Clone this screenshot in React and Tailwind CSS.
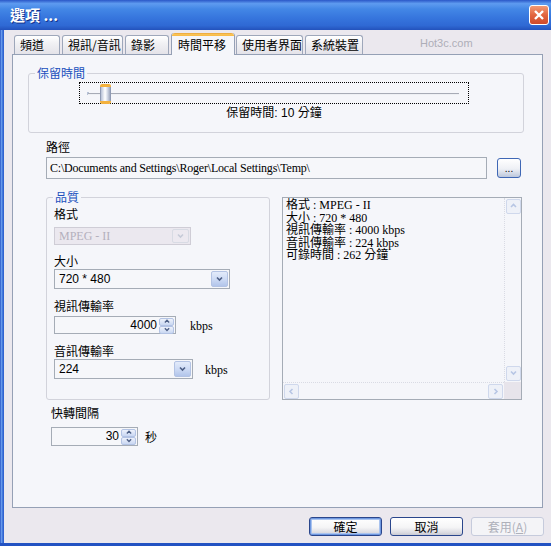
import React from 'react';

// ─── shared bits ─────────────────────────────────────────────────────────────

const CJK = "font-['Noto_Sans_CJK_TC',sans-serif]";
const SERIF = "font-['Liberation_Serif','Noto_Sans_CJK_TC',serif]";
const SANS = "font-['Liberation_Sans','Noto_Sans_CJK_TC',sans-serif]";

function Chevron({ dir = 'down', color = '#4d5f86', size = 7 }) {
  const d = dir === 'down' ? 'M1 1.5 L3.5 4 L6 1.5' : dir === 'up' ? 'M1 4 L3.5 1.5 L6 4'
    : dir === 'left' ? 'M4.5 1 L2 3.5 L4.5 6' : 'M2.5 1 L5 3.5 L2.5 6';
  return (
    <svg width={size} height={size} viewBox="0 0 7 7">
      <path d={d} fill="none" stroke={color} strokeWidth="1.6" />
    </svg>
  );
}

function DropButton({ disabled }) {
  return (
    <div
      className={
        'w-[17px] h-full rounded-[2px] border flex items-center justify-center ' +
        (disabled
          ? 'border-[#d8dbe4] bg-[#ece9f0]'
          : 'border-[#b3c3e4] bg-[linear-gradient(180deg,#e3ebfa_0%,#cbd9f4_55%,#b2c5ea_100%)]')
      }
    >
      <Chevron color={disabled ? '#c6cbd8' : '#4d5f86'} />
    </div>
  );
}

function Combo({ value, className, disabled }) {
  return (
    <div
      className={
        'flex border p-[1px] ' +
        (disabled ? 'border-[#cfcdd6] bg-[#ebe8ef] ' : 'border-[#a5acb6] bg-[#f6f7fa] ') +
        className
      }
    >
      <span
        className={
          'flex-1 pl-[3px] text-[12px] leading-[16px] flex items-center ' +
          (disabled ? SERIF + ' text-[#b4b0bd]' : SANS + ' text-black')
        }
      >
        {value}
      </span>
      <DropButton disabled={disabled} />
    </div>
  );
}

function SpinButton({ dir }) {
  return (
    <div className="flex-1 rounded-[2px] border border-[#b3c3e4] bg-[linear-gradient(180deg,#eef2fb_0%,#c9d7f2_100%)] flex items-center justify-center">
      <Chevron dir={dir} size={6} color="#4d5f86" />
    </div>
  );
}

function Spin({ value, className }) {
  return (
    <div className={'flex border border-[#a5acb6] bg-[#f6f7fa] p-[1px] ' + className}>
      <span className={SANS + ' flex-1 text-right pr-[2px] text-[12px] leading-[15px] flex items-center justify-end'}>
        {value}
      </span>
      <div className="w-[15px] flex flex-col">
        <SpinButton dir="up" />
        <SpinButton dir="down" />
      </div>
    </div>
  );
}

function Group({ label, className, children }) {
  return (
    <div className={'relative border border-[#d2d3db] rounded-[3px] ' + className}>
      <span className={CJK + ' absolute -top-[8px] left-[6px] px-[2px] bg-[#f5f6fa] text-[#2150bd] text-[12px] leading-[14px]'}>
        {label}
      </span>
      {children}
    </div>
  );
}

function Label({ children, className = '' }) {
  return <div className={CJK + ' text-[12px] leading-[14px] text-black ' + className}>{children}</div>;
}

// ─── title bar ───────────────────────────────────────────────────────────────

function TitleBar() {
  return (
    <div className="h-[30px] flex items-center pl-[10px] pr-[2px] bg-[linear-gradient(180deg,#2a57c8_0%,#5e9bf0_12%,#4387e6_30%,#3675dd_60%,#2f69d4_85%,#2352bc_100%)]">
      <span className={CJK + ' text-white font-bold text-[15px] leading-[18px] [text-shadow:1px_1px_0_#12318a]'}>
        選項 ...
      </span>
      <div className="ml-auto w-[20px] h-[20px] rounded-[3px] border border-white bg-[linear-gradient(180deg,#f39a75_0%,#e2653f_50%,#cf4a2a_100%)] flex items-center justify-center">
        <svg width="12" height="12" viewBox="0 0 12 12">
          <path d="M2 2 L10 10 M10 2 L2 10" stroke="white" strokeWidth="2.4" />
        </svg>
      </div>
    </div>
  );
}

// ─── tabs ────────────────────────────────────────────────────────────────────

const TABS = [
  { label: '頻道', w: 'w-[46px]', ml: 'ml-[2px]' },
  { label: '視訊/音訊', w: 'w-[61px]', ml: 'ml-[2px]' },
  { label: '錄影', w: 'w-[44px]', ml: 'ml-[2px]' },
  { label: '時間平移', w: 'w-[64px]', ml: 'ml-[2px]', active: true },
  { label: '使用者界面', w: 'w-[67px]', ml: 'ml-[1px]' },
  { label: '系統裝置', w: 'w-[58px]', ml: 'ml-[2px]' },
];

function TabStrip() {
  return (
    <div className="h-[21px] flex items-end">
      {TABS.map(t =>
        t.active ? (
          <div
            key={t.label}
            className={t.w + ' ' + t.ml + ' relative z-10 -mb-[1px] h-[22px] rounded-t-[3px] border-x border-[#95a0b5] bg-[#f5f6fa] flex flex-col'}
          >
            <div className="h-[3px] rounded-t-[3px] bg-[linear-gradient(180deg,#e8a43a_0%,#fcc85a_60%,#f5b33f_100%)]" />
            <span className={CJK + ' pl-[6px] text-[12px] leading-[16px] pt-[1px]'}>{t.label}</span>
          </div>
        ) : (
          <div
            key={t.label}
            className={t.w + ' ' + t.ml + ' h-[19px] rounded-t-[3px] border-x border-t border-[#9ea7ba] bg-[linear-gradient(180deg,#ffffff_0%,#f1f1f4_40%,#e4e3e9_100%)] flex items-center'}
          >
            <span className={CJK + ' pl-[5px] text-[12px] leading-[16px]'}>{t.label}</span>
          </div>
        ),
      )}
      <span className="ml-[57px] self-center mb-[1px] font-['Liberation_Sans',sans-serif] text-[11px] leading-[12px] text-[#aeaeb8]">
        Hot3c.com
      </span>
    </div>
  );
}

// ─── slider ──────────────────────────────────────────────────────────────────

function Slider() {
  return (
    <div className="relative ml-[50px] mt-[8px] w-[390px] h-[22px] border border-dotted border-black">
      <div className="absolute left-[7px] top-[9px] w-[2px] h-[3px] bg-[#b8c3d8]" />
      <div className="absolute left-[8px] top-[10px] w-[371px] h-[2px] bg-[#a7abb6] border-b border-[#eef0f4]" />
      <div className="absolute left-[20px] top-[1px] w-[11px] h-[20px] flex flex-col">
        <div className="h-[3px] rounded-t-[2px] bg-[#f3b13d]" />
        <div className="flex-1 border-x border-[#8f9ab3] bg-[linear-gradient(90deg,#b6c0d6_0%,#ffffff_45%,#dfe4ee_65%,#9ea8bf_100%)]" />
        <div className="h-[3px] rounded-b-[2px] bg-[#f3b13d]" />
      </div>
    </div>
  );
}

// ─── info list with disabled scroll bars ─────────────────────────────────────

const INFO = [
  '格式 : MPEG - II',
  '大小 : 720 * 480',
  '視訊傳輸率 : 4000 kbps',
  '音訊傳輸率 : 224 kbps',
  '可錄時間 : 262 分鐘',
];

function ScrollBtn({ dir }) {
  return (
    <div className="w-[15px] h-[15px] rounded-[2px] border border-[#cfd8ec] bg-[#eef1f8] flex items-center justify-center">
      <Chevron dir={dir} color="#b7c6e4" />
    </div>
  );
}

function InfoList() {
  return (
    <div className="w-[240px] h-[203px] border border-[#a5acb6] bg-[#f5f6fa] flex flex-col">
      <div className="flex flex-1 min-h-0">
        <div className={SERIF + ' flex-1 pl-[3px] pt-[1px] text-[12px] leading-[12.5px] text-black'}>
          {INFO.map(l => (
            <div key={l}>{l}</div>
          ))}
        </div>
        <div className="w-[17px] flex flex-col items-center pt-[1px] pb-[1px] border-l border-dotted border-[#d9dbe4]">
          <ScrollBtn dir="up" />
          <div className="flex-1" />
          <ScrollBtn dir="down" />
        </div>
      </div>
      <div className="h-[17px] flex">
        <div className="flex-1 flex items-center px-[1px] border-t border-dotted border-[#d9dbe4]">
          <ScrollBtn dir="left" />
          <div className="flex-1" />
          <ScrollBtn dir="right" />
        </div>
        <div className="w-[17px] bg-[#e7e4eb]" />
      </div>
    </div>
  );
}

// ─── dialog buttons ──────────────────────────────────────────────────────────

function XPButton({ children, isDefault, disabled }) {
  const base = CJK + ' w-[73px] h-[19px] rounded-[3px] border text-[12px] leading-[14px] flex items-center justify-center ';
  if (disabled) {
    return <div className={base + 'border-[#c6cbdc] bg-[#f4f4f7] text-[#aeb0ba]'}>{children}</div>;
  }
  return (
    <div
      className={
        base +
        'border-[#2a468c] text-black bg-[linear-gradient(180deg,#ffffff_0%,#f5f5f6_55%,#dcdce2_85%,#c9cad3_100%)] ' +
        (isDefault ? 'shadow-[inset_0_0_0_1px_#6f98e0,inset_0_0_0_2px_#a9c3ef]' : '')
      }
    >
      {children}
    </div>
  );
}

// ─── main ────────────────────────────────────────────────────────────────────

export default function App() {
  return (
    <div className="w-[551px] h-[546px] flex flex-col overflow-hidden">
      <TitleBar />
      <div className="flex flex-1 min-h-0">
        <div className="w-[4px] bg-[linear-gradient(90deg,#2550c4_0%,#6a9cec_35%,#3a6fd8_70%,#2a5cc9_100%)]" />
        <div className="flex-1 bg-[#ebe8ee] flex flex-col pl-[8px] pr-[7px] pt-[3px]">
          <TabStrip />

          <div className="h-[454px] mr-[1px] border border-[#95a0b5] bg-[#f5f6fa] flex flex-col">
            <Group label="保留時間" className="mt-[18px] ml-[15px] w-[496px] h-[60px]">
              <Slider />
              <div className={SANS + ' ml-[50px] mt-[2px] w-[390px] text-center text-[12px] leading-[15px]'}>
                保留時間: 10 分鐘
              </div>
            </Group>

            <Label className="mt-[7px] ml-[33px]">路徑</Label>
            <div className="mt-[3px] ml-[33px] flex items-center gap-[10px]">
              <div className={SERIF + ' w-[441px] h-[22px] border border-[#a5acb6] bg-[#f6f7fa] pl-[3px] text-[12px] leading-[20px] tracking-[-0.2px] whitespace-nowrap overflow-hidden'}>
                C:\Documents and Settings\Roger\Local Settings\Temp\
              </div>
              <div className="w-[24px] h-[20px] rounded-[3px] border border-[#3f67b5] bg-[linear-gradient(180deg,#ffffff_0%,#eef0f5_55%,#bcc7dc_100%)] flex items-end justify-center pb-[4px]">
                <span className="font-['Liberation_Sans',sans-serif] text-[10px] leading-[8px] text-black">...</span>
              </div>
            </div>

            <div className="mt-[18px] ml-[33px] flex gap-[12px]">
              <Group label="品質" className="w-[224px] h-[203px] pl-[7px] flex flex-col">
                <Label className="mt-[9px]">格式</Label>
                <Combo value="MPEG - II" disabled className="mt-[6px] w-[137px] h-[18px]" />
                <Label className="mt-[9px]">大小</Label>
                <Combo value="720 * 480" className="mt-[1px] w-[176px] h-[20px]" />
                <Label className="mt-[10px]">視訊傳輸率</Label>
                <div className="mt-[3px] flex items-center gap-[14px]">
                  <Spin value="4000" className="w-[122px] h-[18px]" />
                  <span className={SERIF + ' text-[12px] leading-[14px] mt-[2px]'}>kbps</span>
                </div>
                <Label className="mt-[10px]">音訊傳輸率</Label>
                <div className="mt-[1px] flex items-center gap-[12px]">
                  <Combo value="224" className="w-[139px] h-[20px]" />
                  <span className={SERIF + ' text-[12px] leading-[14px] mt-[2px]'}>kbps</span>
                </div>
              </Group>
              <InfoList />
            </div>

            <Label className="mt-[6px] ml-[38px]">快轉間隔</Label>
            <div className="mt-[7px] ml-[38px] flex items-center gap-[7px]">
              <Spin value="30" className="w-[87px] h-[19px]" />
              <span className={CJK + ' text-[12px] leading-[14px]'}>秒</span>
            </div>
          </div>

          <div className="mt-[9px] flex justify-end gap-[8px]">
            <XPButton isDefault>確定</XPButton>
            <XPButton>取消</XPButton>
            <XPButton disabled>
              套用(<span className="underline">A</span>)
            </XPButton>
          </div>
        </div>
      </div>
      <div className="h-[3px] bg-[#2352c2]" />
    </div>
  );
}
